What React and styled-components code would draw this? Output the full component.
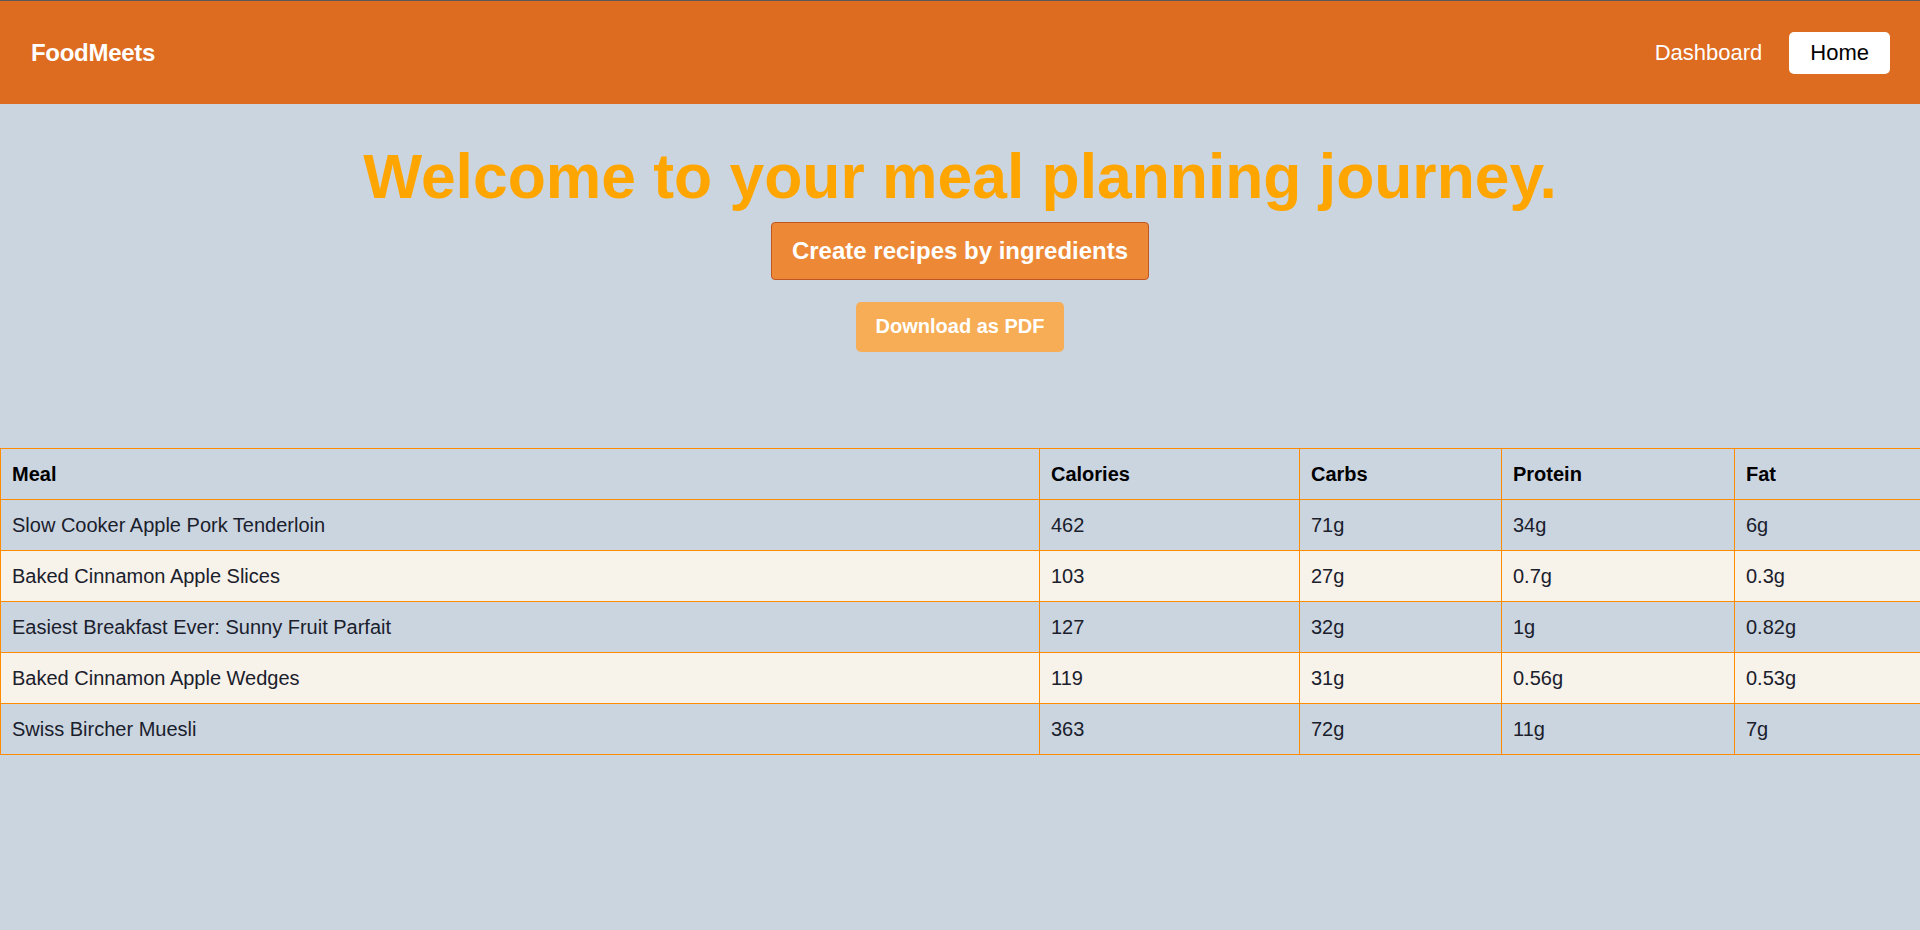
import React from "react";
import styled, { createGlobalStyle } from "styled-components";

const GlobalStyle = createGlobalStyle`
  body {
    margin: 0;
    background: #cbd5e0;
    font-family: "Liberation Sans", Arial, sans-serif;
  }
`;

const Page = styled.div`
  min-height: 930px;
  background: #cbd5e0;
`;

const Nav = styled.nav`
  height: 103px;
  border-top: 1px solid #5a5a5a;
  background: #dd6b20;
  display: flex;
  align-items: center;
  justify-content: space-between;
  padding: 0 30px 0 31px;
`;

const Brand = styled.a`
  color: #fff;
  font-size: 24px;
  font-weight: 700;
  letter-spacing: -0.3px;
  text-decoration: none;
`;

const NavLinks = styled.div`
  display: flex;
  align-items: center;
  gap: 27px;
`;

const NavLink = styled.a`
  color: ${(p) => (p.active ? "#000" : "#fff")};
  background: ${(p) => (p.active ? "#fff" : "transparent")};
  font-size: 22px;
  line-height: 25px;
  padding: ${(p) => (p.active ? "8px 21px 9px" : "0")};
  border-radius: 5px;
  text-decoration: none;
`;

const Hero = styled.section`
  display: flex;
  flex-direction: column;
  align-items: center;
`;

const Title = styled.h1`
  margin: 37px 0 9px;
  color: #ffa500;
  font-size: 62.4px;
  line-height: 72px;
  font-weight: 700;
`;

const Button = styled.button`
  font-family: "Liberation Sans", Arial, sans-serif;
  font-weight: 700;
  color: #fff;
  cursor: pointer;
  border-radius: ${(p) => (p.primary ? "4px" : "5px")};
  border: ${(p) => (p.primary ? "1px solid #c05621" : "none")};
  background: ${(p) => (p.primary ? "#ed8936" : "#f6ad55")};
  font-size: ${(p) => (p.primary ? "24px" : "20px")};
  line-height: ${(p) => (p.primary ? "28px" : "23px")};
  padding: ${(p) => (p.primary ? "14px 20px" : "13px 20px 14px")};
  margin-bottom: ${(p) => (p.primary ? "22px" : "96px")};
`;

const Table = styled.table`
  width: 100%;
  border-collapse: collapse;
  table-layout: fixed;
  color: #1a202c;
  font-size: 20px;
`;

const Row = styled.tr`
  background: ${(p) => (p.shade ? "#f7f2ea" : "transparent")};
`;

const Cell = styled.td`
  border: 1px solid #ff8c00;
  padding: 14px 11px;
  line-height: 22px;
  text-align: left;
  font-weight: ${(p) => (p.head ? 700 : 400)};
  color: ${(p) => (p.head ? "#000" : "#1a202c")};
`;

const cols = [1039, 260, 202, 233, 186];
const heads = ["Meal", "Calories", "Carbs", "Protein", "Fat"];

const meals = [
  ["Slow Cooker Apple Pork Tenderloin", "462", "71g", "34g", "6g"],
  ["Baked Cinnamon Apple Slices", "103", "27g", "0.7g", "0.3g"],
  ["Easiest Breakfast Ever: Sunny Fruit Parfait", "127", "32g", "1g", "0.82g"],
  ["Baked Cinnamon Apple Wedges", "119", "31g", "0.56g", "0.53g"],
  ["Swiss Bircher Muesli", "363", "72g", "11g", "7g"],
];

const App = () => {
  return (
    <Page>
      <GlobalStyle />
      <Nav>
        <Brand href="/">FoodMeets</Brand>
        <NavLinks>
          <NavLink href="/">Dashboard</NavLink>
          <NavLink href="/" active>
            Home
          </NavLink>
        </NavLinks>
      </Nav>
      <Hero>
        <Title>Welcome to your meal planning journey.</Title>
        <Button primary>Create recipes by ingredients</Button>
        <Button>Download as PDF</Button>
      </Hero>
      <Table>
        <colgroup>
          {cols.map((w, i) => (
            <col key={i} style={{ width: w }} />
          ))}
        </colgroup>
        <thead>
          <Row>
            {heads.map((h) => (
              <Cell as="th" head key={h}>
                {h}
              </Cell>
            ))}
          </Row>
        </thead>
        <tbody>
          {meals.map((m, i) => (
            <Row key={m[0]} shade={i % 2 === 1}>
              {m.map((v, j) => (
                <Cell key={j}>{v}</Cell>
              ))}
            </Row>
          ))}
        </tbody>
      </Table>
    </Page>
  );
};

export default App;
